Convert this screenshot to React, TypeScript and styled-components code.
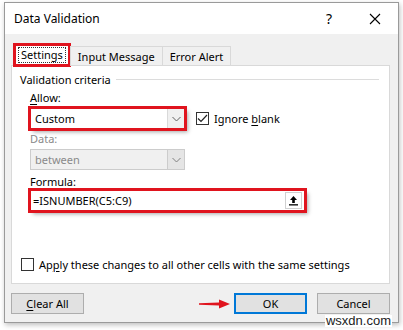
import React from "react";
import styled, { createGlobalStyle } from "styled-components";

const Global = createGlobalStyle`
  html, body { margin: 0; padding: 0; background: #ffffff; }
  body { font-family: "Noto Sans", "Open Sans", sans-serif; font-size: 11px; color: #000; }
  * { box-sizing: border-box; }
`;

const Stage = styled.div`
  position: relative;
  width: 403px;
  height: 330px;
  padding: 2px 0 0 4px;
`;

const Window = styled.div`
  width: 395px;
  height: 321px;
  border: 1px solid #9a9a9a;
  background: #f0f0f0;
  box-shadow: 1px 2px 5px rgba(0,0,0,0.25);
  display: flex;
  flex-direction: column;
`;

const TitleBar = styled.div`
  height: 31px;
  background: #ffffff;
  display: flex;
  align-items: center;
  padding: 0 0 0 9px;
  font-size: 12px;
`;

const Title = styled.div`
  flex: 1;
`;

const TitleButton = styled.div`
  width: 46px;
  height: 31px;
  display: flex;
  align-items: center;
  justify-content: center;
  font-size: 14px;
`;

const Body = styled.div`
  flex: 1;
  display: flex;
  flex-direction: column;
  padding: 8px 8px 0 6px;
`;

const TabStrip = styled.div`
  display: flex;
  align-items: flex-end;
  height: 23px;
  padding-left: 3px;
  position: relative;
  z-index: 1;
`;

const Tab = styled.div<{ $active?: boolean; $highlight?: boolean }>`
  height: ${(p) => (p.$active ? "22px" : "20px")};
  padding: 0 ${(p) => (p.$active ? "3px" : "7px")};
  margin-right: ${(p) => (p.$active ? "0" : "-1px")};
  background: ${(p) => (p.$active ? "#ffffff" : "#f0f0f0")};
  border: 1px solid #d9d9d9;
  border-bottom: ${(p) => (p.$active ? "1px solid #ffffff" : "1px solid #d9d9d9")};
  display: flex;
  align-items: center;
  outline: ${(p) => (p.$highlight ? "3px solid #e0141e" : "none")};
  outline-offset: -2px;
  margin-bottom: -1px;
`;

const FocusText = styled.span`
  border: 1px dotted #333;
  padding: 0 2px;
  line-height: 14px;
`;

const Panel = styled.div`
  height: 219px;
  background: #ffffff;
  border: 1px solid #d9d9d9;
  padding: 6px 8px 0 8px;
  display: flex;
  flex-direction: column;
`;

const GroupHeader = styled.div`
  display: flex;
  align-items: center;
  height: 14px;
  gap: 5px;
`;

const GroupLine = styled.div`
  flex: 1;
  height: 1px;
  background: #dcdcdc;
  margin-right: 2px;
`;

const Fields = styled.div`
  padding-left: 10px;
  display: flex;
  flex-direction: column;
`;

const Label = styled.div<{ $disabled?: boolean; $top: number }>`
  margin-top: ${(p) => p.$top}px;
  height: 14px;
  line-height: 14px;
  color: ${(p) => (p.$disabled ? "#8a8a8a" : "#000")};
`;

const U = styled.span`
  text-decoration: underline;
  text-underline-offset: 2px;
`;

const Row = styled.div<{ $top: number }>`
  display: flex;
  align-items: center;
  margin-top: ${(p) => p.$top}px;
  gap: 11px;
`;

const Combo = styled.div<{ $disabled?: boolean; $highlight?: boolean }>`
  width: 155px;
  height: 21px;
  display: flex;
  border: 1px solid ${(p) => (p.$disabled ? "#cccccc" : "#7a7a7a")};
  background: ${(p) => (p.$disabled ? "#f0f0f0" : "#ffffff")};
  color: ${(p) => (p.$disabled ? "#8a8a8a" : "#000")};
  outline: ${(p) => (p.$highlight ? "3px solid #e0141e" : "none")};
  outline-offset: -1px;
  box-shadow: ${(p) => (p.$highlight ? "3px 3px 4px rgba(0,0,0,0.35)" : "none")};
`;

const ComboText = styled.div`
  flex: 1;
  display: flex;
  align-items: center;
  padding-left: 4px;
`;

const ComboButton = styled.div<{ $disabled?: boolean }>`
  width: 17px;
  display: flex;
  align-items: center;
  justify-content: center;
  background: ${(p) => (p.$disabled ? "#e5e5e5" : "#f0f0f0")};
  border-left: 1px solid ${(p) => (p.$disabled ? "#cccccc" : "#d9d9d9")};
`;

const CheckRow = styled.label`
  display: flex;
  align-items: center;
  gap: 5px;
`;

const Box = styled.span`
  width: 13px;
  height: 13px;
  border: 1px solid #333;
  background: #fff;
  display: flex;
  align-items: center;
  justify-content: center;
`;

const FormulaField = styled.div`
  width: 275px;
  height: 21px;
  display: flex;
  align-items: center;
  border: 1px solid #7a7a7a;
  outline: 3px solid #e0141e;
  outline-offset: -1px;
  box-shadow: 3px 3px 4px rgba(0,0,0,0.35);
  background: #fff;
  padding: 1px 2px 1px 2px;
`;

const FormulaText = styled.div`
  flex: 1;
`;

const RefButton = styled.div`
  width: 17px;
  height: 17px;
  border: 1px solid #d0d0d0;
  display: flex;
  align-items: center;
  justify-content: center;
`;

const ApplyRow = styled.div`
  margin-top: 46px;
  margin-left: 1px;
`;

const Footer = styled.div`
  display: flex;
  align-items: center;
  height: 43px;
  padding: 0 0 4px 0;
`;

const Button = styled.div<{ $default?: boolean }>`
  width: 73px;
  height: 21px;
  display: flex;
  align-items: center;
  justify-content: center;
  background: #e1e1e1;
  border: ${(p) => (p.$default ? "2px solid #0078d7" : "1px solid #adadad")};
`;

const Spacer = styled.div<{ $w?: number }>`
  flex: ${(p) => (p.$w ? `0 0 ${p.$w}px` : "1")};
`;

const Arrow = styled.svg`
  margin-right: 3px;
`;

const Watermark = styled.div`
  position: absolute;
  right: 11px;
  bottom: 3px;
  background: #ffffff;
  font-family: "Liberation Sans", Arial, sans-serif;
  font-size: 13px;
  line-height: 12px;
  padding: 0 1px;
  color: #222;
`;

const Chevron = ({ color }: { color: string }) => (
  <svg width="9" height="6" viewBox="0 0 9 6">
    <path d="M0.5 1 L4.5 5 L8.5 1" fill="none" stroke={color} strokeWidth="1" />
  </svg>
);

export default function App() {
  return (
    <>
      <Global />
      <Stage>
        <Window>
          <TitleBar>
            <Title>Data Validation</Title>
            <TitleButton>?</TitleButton>
            <TitleButton>
              <svg width="12" height="12" viewBox="0 0 12 12">
                <path d="M1 1 L11 11 M11 1 L1 11" stroke="#000" strokeWidth="1.1" />
              </svg>
            </TitleButton>
          </TitleBar>
          <Body>
            <TabStrip>
              <Tab $active $highlight>
                <FocusText>Settings</FocusText>
              </Tab>
              <Tab>Input Message</Tab>
              <Tab>Error Alert</Tab>
            </TabStrip>
            <Panel>
              <GroupHeader>
                <span>Validation criteria</span>
                <GroupLine />
              </GroupHeader>
              <Fields>
                <Label $top={5}>
                  <U>A</U>llow:
                </Label>
                <Row $top={3}>
                  <Combo $highlight>
                    <ComboText>Custom</ComboText>
                    <ComboButton>
                      <Chevron color="#606060" />
                    </ComboButton>
                  </Combo>
                  <CheckRow>
                    <Box>
                      <svg width="11" height="9" viewBox="0 0 11 9">
                        <path d="M1 4.5 L4 7.5 L10 1" fill="none" stroke="#222" strokeWidth="1.2" />
                      </svg>
                    </Box>
                    <span>
                      Ignore <U>b</U>lank
                    </span>
                  </CheckRow>
                </Row>
                <Label $disabled $top={3}>
                  Data:
                </Label>
                <Row $top={3}>
                  <Combo $disabled>
                    <ComboText>between</ComboText>
                    <ComboButton $disabled>
                      <Chevron color="#808080" />
                    </ComboButton>
                  </Combo>
                </Row>
                <Label $top={5}>
                  <U>F</U>ormula:
                </Label>
                <Row $top={1}>
                  <FormulaField>
                    <FormulaText>=ISNUMBER(C5:C9)</FormulaText>
                    <RefButton>
                      <svg width="11" height="11" viewBox="0 0 11 11">
                        <path d="M5.5 1 L9 5 L6.8 5 L6.8 8 L4.2 8 L4.2 5 L2 5 Z" fill="#000" />
                        <rect x="1" y="9.2" width="9" height="1.3" fill="#000" />
                      </svg>
                    </RefButton>
                  </FormulaField>
                </Row>
              </Fields>
              <ApplyRow>
                <CheckRow>
                  <Box />
                  <span>
                    Ap<U>p</U>ly these changes to all other cells with the same settings
                  </span>
                </CheckRow>
              </ApplyRow>
            </Panel>
            <Footer>
              <Button>
                <span>
                  <U>C</U>lear All
                </span>
              </Button>
              <Spacer />
              <Arrow width="32" height="10" viewBox="0 0 32 10">
                <path d="M0 4.3 L20 3.6 L20 0.5 L31 5 L20 9.5 L20 6.4 L0 5.7 Z" fill="#e0141e" />
              </Arrow>
              <Button $default>OK</Button>
              <Spacer $w={10} />
              <Button>Cancel</Button>
            </Footer>
          </Body>
        </Window>
        <Watermark>wsxdn.com</Watermark>
      </Stage>
    </>
  );
}
